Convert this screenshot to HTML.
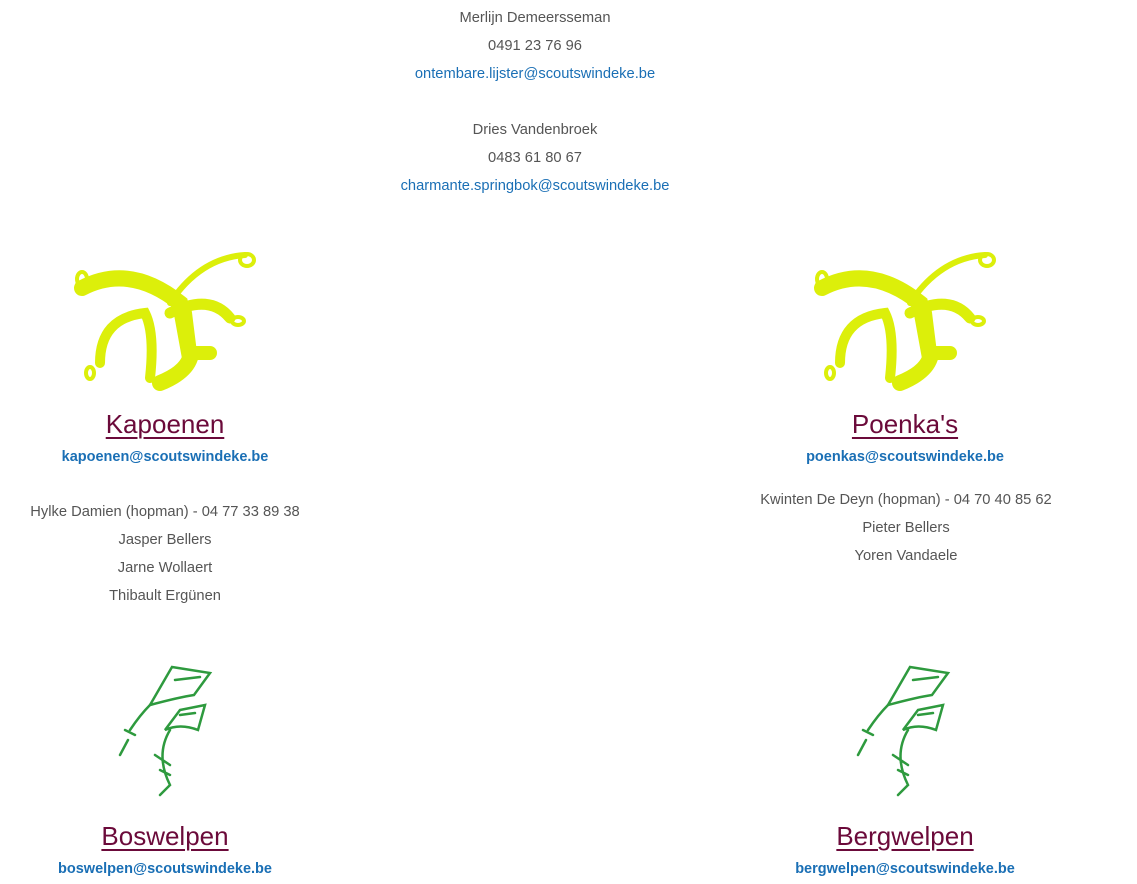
<html><head><style>
body{margin:0;width:1137px;height:884px;background:#fff;font-family:"Liberation Sans",sans-serif;color:#555;font-size:14.7px;position:relative;overflow:hidden}
.t{position:absolute;text-align:center;line-height:28px}
a{color:#1a6fb5;text-decoration:none}
.h{position:absolute;text-align:center;font-size:26px;color:#6b0a3a;text-decoration:underline;text-underline-offset:4px;text-decoration-thickness:2px}
.e{position:absolute;text-align:center;font-weight:bold;color:#1a6fb5;font-size:14.5px}
svg{position:absolute}
</style></head><body>
<div class="t" style="left:335px;width:400px;top:4px">Merlijn Demeersseman<br>0491 23 76 96<br><a>ontembare.lijster@scoutswindeke.be</a><br><br>Dries Vandenbroek<br>0483 61 80 67<br><a>charmante.springbok@scoutswindeke.be</a></div>

<svg style="left:70px;top:243px" width="190" height="150" viewBox="0 0 190 150" fill="none" stroke="#dcef0a" stroke-linecap="round">
<path d="M12 45 Q60 20 110 60 L120 115 Q115 130 90 140" stroke-width="16"/>
<path d="M30 120 Q30 75 75 70 Q85 90 80 135" stroke-width="10"/>
<path d="M100 60 Q130 15 175 12" stroke-width="6"/>
<path d="M100 70 Q140 50 160 75" stroke-width="11"/>
<path d="M115 70 L120 110 L140 110" stroke-width="14"/>
<ellipse cx="177" cy="17" rx="7" ry="6" stroke-width="4"/>
<ellipse cx="12" cy="36" rx="5" ry="7" stroke-width="4"/>
<ellipse cx="20" cy="130" rx="4" ry="6" stroke-width="4"/>
<ellipse cx="168" cy="78" rx="6" ry="4" stroke-width="4"/>
</svg>
<svg style="left:810px;top:243px" width="190" height="150" viewBox="0 0 190 150" fill="none" stroke="#dcef0a" stroke-linecap="round">
<path d="M12 45 Q60 20 110 60 L120 115 Q115 130 90 140" stroke-width="16"/>
<path d="M30 120 Q30 75 75 70 Q85 90 80 135" stroke-width="10"/>
<path d="M100 60 Q130 15 175 12" stroke-width="6"/>
<path d="M100 70 Q140 50 160 75" stroke-width="11"/>
<path d="M115 70 L120 110 L140 110" stroke-width="14"/>
<ellipse cx="177" cy="17" rx="7" ry="6" stroke-width="4"/>
<ellipse cx="12" cy="36" rx="5" ry="7" stroke-width="4"/>
<ellipse cx="20" cy="130" rx="4" ry="6" stroke-width="4"/>
<ellipse cx="168" cy="78" rx="6" ry="4" stroke-width="4"/>
</svg>

<div class="h" style="left:15px;width:300px;top:409px">Kapoenen</div>
<div class="e" style="left:15px;width:300px;top:449px">kapoenen@scoutswindeke.be</div>
<div class="t" style="left:15px;width:300px;top:498px">Hylke Damien (hopman) - 04 77 33 89 38<br>Jasper Bellers<br>Jarne Wollaert<br>Thibault Ergünen</div>

<div class="h" style="left:755px;width:300px;top:409px">Poenka's</div>
<div class="e" style="left:755px;width:300px;top:449px">poenkas@scoutswindeke.be</div>
<div class="t" style="left:706px;width:400px;top:486px">Kwinten De Deyn (hopman) - 04 70 40 85 62<br>Pieter Bellers<br>Yoren Vandaele</div>

<svg style="left:110px;top:655px" width="115" height="145" viewBox="0 0 115 145" fill="none" stroke="#2e9a3e" stroke-width="2.5" stroke-linecap="round">
<path d="M62 12 L100 18 L84 40 Q70 42 40 50 Z M65 25 L90 22"/>
<path d="M70 55 L95 50 L88 75 Q70 68 55 75 Z M70 60 L85 58"/>
<path d="M40 50 Q30 60 20 75 M10 100 L18 85 M15 75 L25 80"/>
<path d="M60 75 Q45 100 60 130 L50 140 M45 100 L60 110 M50 115 L60 120"/>
</svg>
<svg style="left:848px;top:655px" width="115" height="145" viewBox="0 0 115 145" fill="none" stroke="#2e9a3e" stroke-width="2.5" stroke-linecap="round">
<path d="M62 12 L100 18 L84 40 Q70 42 40 50 Z M65 25 L90 22"/>
<path d="M70 55 L95 50 L88 75 Q70 68 55 75 Z M70 60 L85 58"/>
<path d="M40 50 Q30 60 20 75 M10 100 L18 85 M15 75 L25 80"/>
<path d="M60 75 Q45 100 60 130 L50 140 M45 100 L60 110 M50 115 L60 120"/>
</svg>

<div class="h" style="left:15px;width:300px;top:821px">Boswelpen</div>
<div class="e" style="left:15px;width:300px;top:861px">boswelpen@scoutswindeke.be</div>
<div class="h" style="left:755px;width:300px;top:821px">Bergwelpen</div>
<div class="e" style="left:755px;width:300px;top:861px">bergwelpen@scoutswindeke.be</div>
</body></html>
